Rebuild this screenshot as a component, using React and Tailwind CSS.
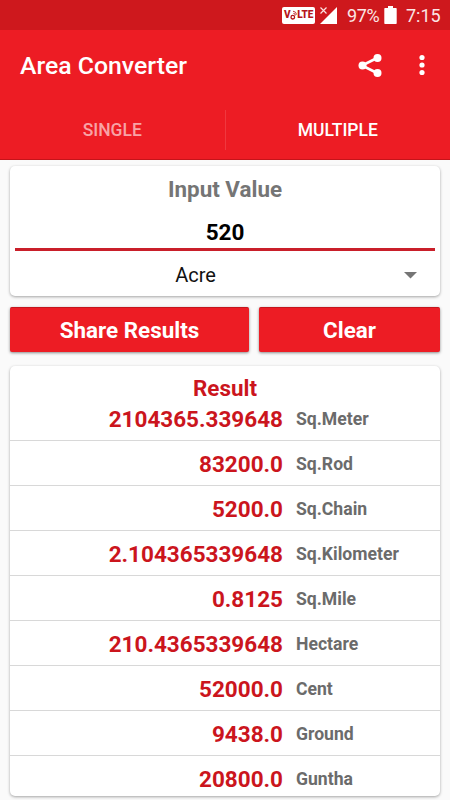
const RESULTS = [
  ['2104365.339648', 'Sq.Meter'],
  ['83200.0', 'Sq.Rod'],
  ['5200.0', 'Sq.Chain'],
  ['2.104365339648', 'Sq.Kilometer'],
  ['0.8125', 'Sq.Mile'],
  ['210.4365339648', 'Hectare'],
  ['52000.0', 'Cent'],
  ['9438.0', 'Ground'],
  ['20800.0', 'Guntha'],
];

function StatusBar() {
  return (
    <div className="flex h-[30px] items-center justify-end bg-[#ce181d] pr-[10px] text-[18px] text-[#fbe6e6]">
      <span className="flex h-[17px] w-[33px] items-center justify-center rounded-[2px] bg-white text-[10px] font-black leading-none tracking-[-0.2px] text-[#b5161b]">
        <span>V</span>
        <svg className="h-[11px] w-[7px]" viewBox="0 0 7 11" fill="none" stroke="currentColor">
          <circle cx="2.8" cy="7.2" r="1.8" strokeWidth="1.3" />
          <path d="M3.4 3.4a2 2 0 0 1 2 2M3 1.2a4 4 0 0 1 3.6 3.4" strokeWidth="0.9" />
        </svg>
        <span>LTE</span>
      </span>
      <svg className="ml-[4px] h-[18px] w-[19px]" viewBox="0 0 19 18">
        <path d="M18 1v17H1z" fill="#fff" />
        <path d="M1.5 1.5l6 6M7.5 1.5l-6 6" stroke="#fbe0e0" strokeWidth="1.2" />
      </svg>
      <span className="ml-[9px] w-[33px] text-[18px] tracking-[-0.4px]">97%</span>
      <svg className="ml-[4px] h-[18px] w-[13px]" viewBox="0 0 13 18" fill="#fff">
        <path d="M4 0h5v2h3a.7.7 0 0 1 .7.7v14.6a.7.7 0 0 1-.7.7H1a.7.7 0 0 1-.7-.7V2.700A.7.7 0 0 1 1 2h3z" />
      </svg>
      <span className="ml-[9px] w-[34px] whitespace-nowrap">7:15</span>
    </div>
  );
}

function AppBar() {
  return (
    <header className="h-[130px] border-b border-[#c4141a] bg-[#ed1c24] text-white">
      <div className="flex h-[70px] items-center pl-[20px] pr-[24px]">
        <h1 className="flex-1 pt-[2px] text-[24.8px] font-medium leading-none">Area Converter</h1>
        <svg className="h-[25px] w-[26px]" viewBox="0 0 26 25" fill="#fff" stroke="#fff">
          <path d="M20 5L5 12.500L20 20" fill="none" strokeWidth="2.6" />
          <circle cx="20.500" cy="5" r="4" stroke="none" />
          <circle cx="5.500" cy="12.500" r="4" stroke="none" />
          <circle cx="20.500" cy="20" r="4" stroke="none" />
        </svg>
        <svg className="ml-[35px] h-[22px] w-[8px]" viewBox="0 0 8 22" fill="#fff">
          <circle cx="4" cy="3.500" r="2.600" />
          <circle cx="4" cy="11" r="2.600" />
          <circle cx="4" cy="18.500" r="2.600" />
        </svg>
      </div>
      <nav className="flex h-[59px] items-center text-[17.5px] font-medium">
        <button className="flex h-10 flex-1 items-center justify-center border-r border-[#f0383f] pt-[2px] text-[#f8a3a6]">SINGLE</button>
        <button className="flex h-10 flex-1 items-center justify-center pt-[2px] text-white">MULTIPLE</button>
      </nav>
    </header>
  );
}

export default function App() {
  return (
    <div className="h-[800px] w-[450px] overflow-hidden bg-[#fafafa] font-[Roboto,sans-serif]">
      <StatusBar />
      <AppBar />
      <main className="px-[10px] pt-[6px]">
        <section className="h-[130px] rounded-[5px] bg-white px-[5px] shadow-[0_1px_3px_rgba(0,0,0,0.35)]">
          <h2 className="flex h-[46px] items-center justify-center pt-[2px] text-[22.4px] font-bold text-[#757575]">Input Value</h2>
          <div className="flex h-[39px] items-center justify-center border-b-[3px] border-[#c91f2a] pt-[5px] text-[22.5px] font-bold text-black">520</div>
          <div className="flex h-[48px] items-center pr-[18px] text-[20px] text-[#111]">
            <span className="flex-1 pr-[28px] text-center">Acre</span>
            <svg className="h-[7px] w-[13px]" viewBox="0 0 13 7" fill="#757575">
              <path d="M0 0h13L6.500 6.500z" />
            </svg>
          </div>
        </section>
        <div className="mt-[11px] flex h-[45px] gap-[10px] text-[22.4px] font-bold text-white">
          <button className="w-[239px] rounded-[2px] border-t border-[#c5161d] bg-[#ed1c24] pt-[2px] shadow-[0_1px_3px_rgba(0,0,0,0.45)]">Share Results</button>
          <button className="flex-1 rounded-[2px] border-t border-[#c5161d] bg-[#ed1c24] pt-[2px] shadow-[0_1px_3px_rgba(0,0,0,0.45)]">Clear</button>
        </div>
        <section className="mt-[14px] h-[430px] overflow-hidden rounded-[5px] bg-white shadow-[0_1px_3px_rgba(0,0,0,0.35)]">
          <h2 className="h-[30px] pt-[7px] text-center text-[22.4px] font-bold leading-[30px] text-[#cb151d]">Result</h2>
          <ul>
            {RESULTS.map(([value, unit]) => (
              <li key={unit} className="flex h-[45px] items-center border-b border-[#d8d8d8] pt-[3px] font-bold last:border-transparent">
                <span className="w-[273px] text-right text-[22.5px] text-[#cb151d]">{value}</span>
                <span className="ml-[13px] text-[17.6px] text-[#6b6b6b]">{unit}</span>
              </li>
            ))}
          </ul>
        </section>
      </main>
    </div>
  );
}
